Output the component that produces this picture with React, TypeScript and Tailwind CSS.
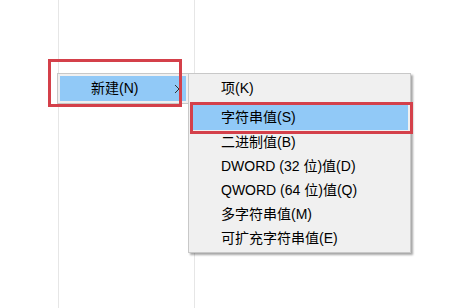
import React from "react";

const font = { fontFamily: '"Liberation Sans", "Noto Sans CJK SC", sans-serif' };

const subItems = [
  "项(K)",
  "字符串值(S)",
  "二进制值(B)",
  "DWORD (32 位)值(D)",
  "QWORD (64 位)值(Q)",
  "多字符串值(M)",
  "可扩充字符串值(E)",
];

export default function App() {
  return (
    <div
      className="relative w-[461px] h-[308px] bg-white overflow-hidden text-[14px] text-black"
      style={font}
    >
      {/* background list columns */}
      <div className="flex h-full">
        <div className="w-[59px] h-full border-r border-[#e6e6e6]" />
        <div className="w-[136px] h-full border-r border-[#e6e6e6]" />
        <div className="flex-1" />
      </div>

      {/* first-level menu */}
      <div className="absolute left-[57px] top-[73px] w-[132px] h-[31px] bg-[#f0f0f0] border border-[#c8c8c8] p-[2px]">
        <div className="h-[25px] bg-[#91c9f7] flex items-center pl-[31px] pr-[6px]">
          <span className="flex-1">新建(N)</span>
          <svg width="6" height="10" viewBox="0 0 6 10" className="mt-[1px]">
            <path d="M1 1 L5 5 L1 9" fill="none" stroke="#333" strokeWidth="1" />
          </svg>
        </div>
      </div>

      {/* submenu */}
      <div className="absolute left-[188px] top-[73px] w-[223px] h-[180px] bg-[#f0f0f0] border border-[#c8c8c8] p-[2px] shadow-[2px_2px_2px_rgba(0,0,0,0.35)] flex flex-col">
        {subItems.map((t, i) => (
          <div
            key={t}
            className={
              i === 1
                ? "h-[26px] bg-[#91c9f7] flex items-center pl-[30px] mt-[4px]"
                : "h-[24px] flex items-center pl-[30px]"
            }
          >
            {t}
          </div>
        ))}
      </div>

      {/* red annotation boxes */}
      <div className="absolute left-[48px] top-[59px] w-[134px] h-[48px] border-[3px] border-[#d4404a]" />
      <div className="absolute left-[190px] top-[102px] w-[223px] h-[32px] border-[3px] border-[#d4404a]" />
    </div>
  );
}
